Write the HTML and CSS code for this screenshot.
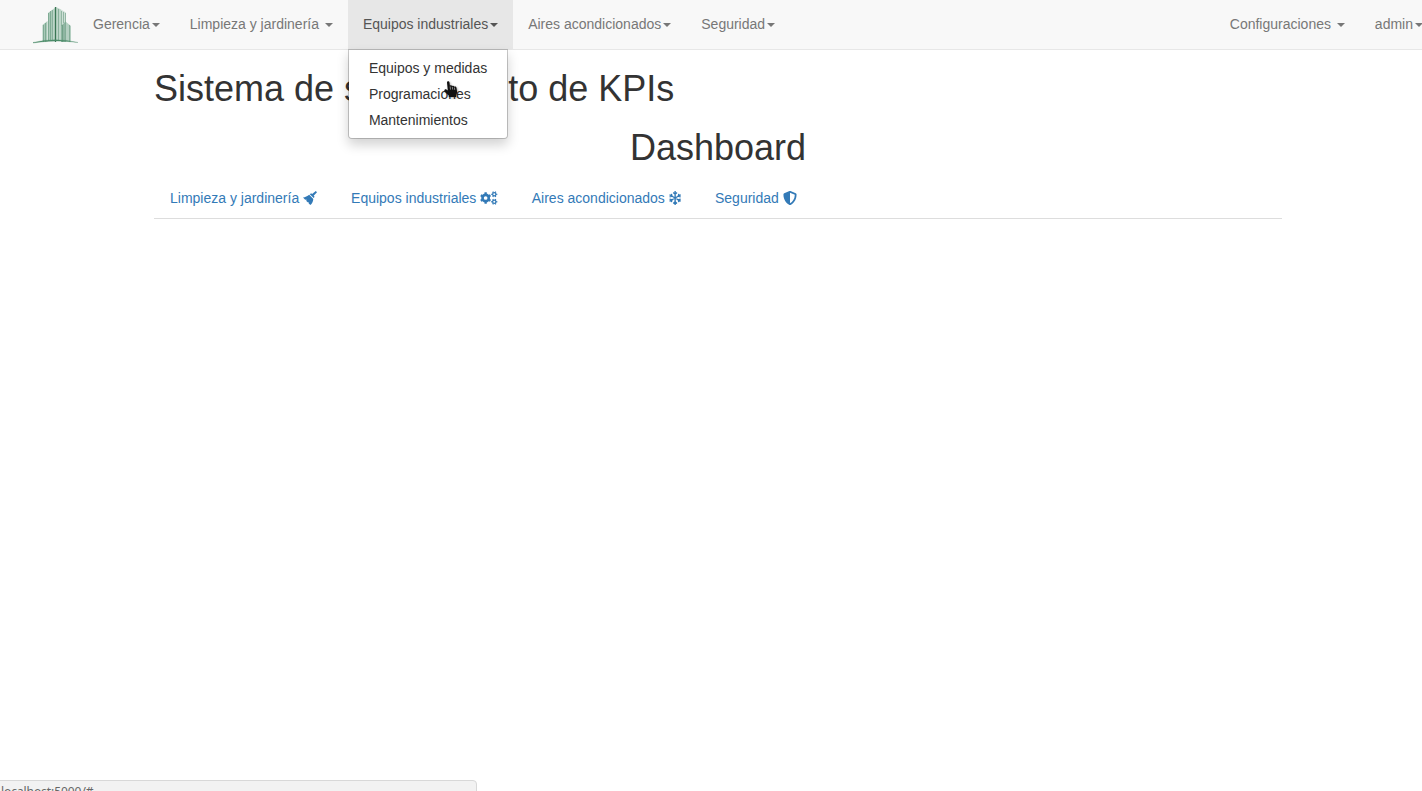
FILE: index.html
```html
<!DOCTYPE html>
<html lang="es">
<head>
<meta charset="utf-8">
<title>Sistema de seguimiento de KPIs</title>
<link rel="stylesheet" href="styles.css">
</head>
<body>
<nav class="navbar">
  <a class="brand" href="#" aria-label="Inicio">
    <svg width="46" height="38" viewBox="0 0 46 38">
      <g fill="#a9c9b8">
        <path d="M9.500 35V18l5-4v21z"/>
        <path d="M15 34V6l4-3v31z"/>
        <path d="M19 34V3l4-3 5 2.500V34z" fill="#bdd5c8"/>
        <path d="M28 34V2.500l5 3V34z" fill="#cfe0d7"/>
        <path d="M28 35V19l4.500-4.500V35z" fill="#8eb5a1"/>
        <path d="M32.500 35V14.500L38 19v16z" fill="#b4cfc1"/>
      </g>
      <g fill="none" stroke="#568d70" stroke-width="1">
        <path d="M10.500 18v17M12.500 16v19M15.500 6v28M17.500 4v30M19.500 3v31" opacity=".5"/>
        <path d="M25.500 2v32M28.500 4v15M30.500 5v11M32.500 6v9" opacity=".5"/>
        <path d="M29.500 18v17M32.500 15v20M36.500 18v17" opacity=".5"/>
        <path d="M22.500 0v35" stroke="#397553" stroke-width="1.300"/>
      </g>
      <path d="M0 35.500Q22 30 45 35.500Q22 32.500 0 36z" fill="#4c8c69" stroke="#4c8c69" stroke-width=".3"/>
    </svg>
  </a>
  <ul class="nav">
    <li><a href="#">Gerencia<b class="caret"></b></a></li>
    <li><a href="#">Limpieza y jardinería <b class="caret"></b></a></li>
    <li class="open"><a href="#">Equipos industriales<b class="caret"></b></a>
      <ul class="dropdown">
        <li><a href="#">Equipos y medidas</a></li>
        <li><a href="#">Programaciones</a></li>
        <li><a href="#">Mantenimientos</a></li>
      </ul>
    </li>
    <li><a href="#">Aires acondicionados<b class="caret"></b></a></li>
    <li><a href="#">Seguridad<b class="caret"></b></a></li>
  </ul>
  <ul class="nav nav-right">
    <li><a href="#">Configuraciones <b class="caret"></b></a></li>
    <li><a href="#">admin<b class="caret"></b></a></li>
  </ul>
</nav>
<main class="container">
  <h1>Sistema de seguimiento de KPIs</h1>
  <h1 class="center">Dashboard</h1>
  <ul class="tabs">
    <li><a href="#">Limpieza y jardinería <svg class="icon" width="14" height="14" viewBox="0 0 14 14"><path d="M12.800 0 14 1.200 10.700 4.800l.9 1-.9 1.300-3.900-3.900 1.300-1 1 .9zM6.200 3.700l4.100 4.200c-.1 2.400-1.300 4.700-3 6.100l-1.700-1.800.1-1-1 .1-1.400-1.400.2-1.300-1.300.2L0 6.400c2.200-.2 4.300-1.100 6.200-2.700z"/></svg></a></li>
    <li><a href="#">Equipos industriales <svg class="icon" width="17.500" height="14" viewBox="0 0 640 512">
      <g fill="none" stroke="currentColor">
        <circle cx="206" cy="256" r="115" stroke-width="94"/>
        <path d="M206 50v80M206 382v80M28 153l69 40M315 319l69 40M28 359l69-40M315 193l69-40" stroke-width="84"/>
        <circle cx="522" cy="120" r="61" stroke-width="48"/>
        <path d="M412 120h38M594 120h38M467 25l19 33M558 182l19 33M467 215l19-33M558 58l19-33" stroke-width="48"/>
        <circle cx="522" cy="392" r="61" stroke-width="48"/>
        <path d="M412 392h38M594 392h38M467 297l19 33M558 454l19 33M467 487l19-33M558 330l19-33" stroke-width="48"/>
      </g>
    </svg></a></li>
    <li><a href="#">Aires acondicionados <svg class="icon" width="12.250" height="14" viewBox="0 0 448 512"><path class="snow" d="M224 4v504M18 137l412 238M18 375l412-238M156 58l68 66 68-66M156 454l68-66 68 66M20 218l92-23-26-92M428 294l-92 23 26 92M20 294l92 23-26 92M428 218l-92-23 26-92"/></svg></a></li>
    <li><a href="#">Seguridad <svg class="icon" width="14" height="14" viewBox="0 0 512 512"><path fill-rule="evenodd" d="M466 84 274 4a48 48 0 0 0-37 0L45 84c-18 7-29 24-29 44 0 198 114 335 221 380 12 5 26 5 38 0 85-36 221-158 221-380 0-20-12-37-30-44zM256 446V66l176 73c-3 152-82 262-176 307z"/></svg></a></li>
  </ul>
</main>
<svg class="pointer" width="14" height="18" viewBox="0 0 14 18"><path d="M3 1.500C3-.1 5.300-.1 5.500 1.500l.4 3.300c.6-.8 1.900-.6 2.200.3.800-.7 1.900-.3 2.200.6 1-.5 2 0 2.200 1.200l.5 3.200c.2 1.600-.1 3-.9 4.100v1.800H4.800v-1.500L.6 10.500C-.3 9.200 1 7.800 2.400 8.500l1.400 1z"/><path class="fingers" d="M6.100 5.400l.4 3.200M8.300 5.800l.4 2.800M10.400 6.500l.3 2.400"/></svg>
<div class="status">localhost:5000/#</div>
</body>
</html>
```
FILE: styles.css
```css
* { box-sizing: border-box; }
body {
  margin: 0;
  height: 791px;
  position: relative;
  overflow: hidden;
  background: #fff;
  color: #333;
  font: 14px/20px "Liberation Sans", Arial, sans-serif;
}
ul { margin: 0; padding: 0; list-style: none; }
a { text-decoration: none; }
.navbar {
  display: flex;
  height: 50px;
  background: #f8f8f8;
  border-bottom: 1px solid #e7e7e7;
}
.brand { display: block; width: 78px; padding: 7px 0 0 33px; }
.brand svg { display: block; }
.nav { display: flex; }
.nav > li { position: relative; }
.nav > li > a {
  display: block;
  height: 49px;
  padding: 14px 15px 15px;
  color: #777;
  white-space: nowrap;
}
.nav > .open > a { background: #e7e7e7; color: #555; }
.nav-right { margin-left: auto; margin-right: -16px; }
.caret {
  display: inline-block;
  margin-left: 2px;
  vertical-align: middle;
  border-top: 4px solid;
  border-left: 4px solid transparent;
  border-right: 4px solid transparent;
}
.dropdown {
  position: absolute;
  z-index: 2;
  top: 49px;
  left: 0;
  width: 160px;
  height: 90px;
  padding: 5px 0;
  background: #fff;
  background-clip: padding-box;
  border: 1px solid rgba(0, 0, 0, .2);
  border-radius: 0 0 4px 4px;
  box-shadow: 0 6px 12px rgba(0, 0, 0, .175);
}
.dropdown a { display: block; padding: 3px 20px; color: #333; white-space: nowrap; }
.container { margin: 0 140px 0 154px; }
h1 { margin: 19px 0 10px; font-size: 36px; font-weight: 500; line-height: 39.6px; }
h1.center { text-align: center; margin-top: 19px; }
.tabs { display: flex; border-bottom: 1px solid #ddd; }
.tabs li { margin-right: 2px; }
.tabs a { display: block; height: 41px; padding: 11px 16px 10px; color: #337ab7; white-space: nowrap; }
.icon { display: inline-block; vertical-align: -2px; fill: currentColor; overflow: visible; }
.snow { fill: none; stroke: currentColor; stroke-width: 50; }
.pointer { position: absolute; z-index: 3; left: 444px; top: 81px; fill: #111; overflow: visible; filter: drop-shadow(1px 1px 1px rgba(0, 0, 0, .35)); }
.fingers { fill: none; stroke: #ccc; stroke-width: .6; }
.status {
  position: absolute;
  left: -1px;
  top: 780px;
  width: 478px;
  height: 24px;
  padding: 1px;
  background: #f2f2f2;
  border: 1px solid #d8d8d8;
  border-radius: 0 4px 0 0;
  color: #666;
  font: 12px/20px "Noto Sans", sans-serif;
  letter-spacing: -.07px;
}
```
